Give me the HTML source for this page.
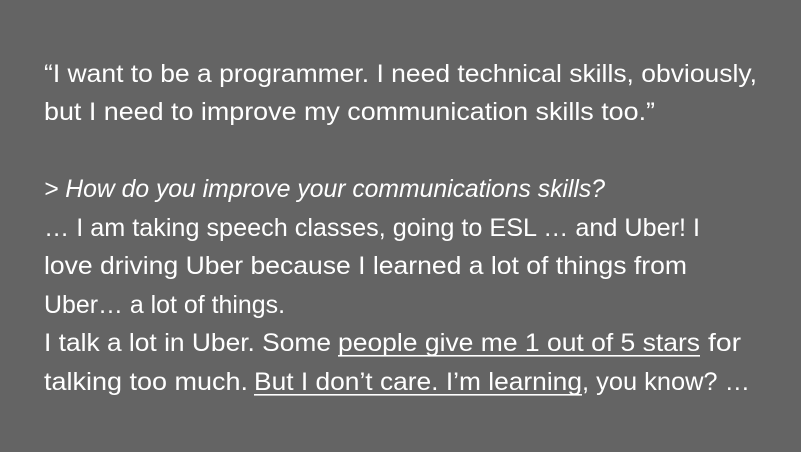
<!DOCTYPE html>
<html><head><meta charset="utf-8"><style>
html,body{margin:0;padding:0;background:#646464;width:801px;height:452px;overflow:hidden}
svg text{font-family:"Liberation Sans",sans-serif;font-size:25px;fill:#fff}
</style></head><body>
<svg width="801" height="452" xmlns="http://www.w3.org/2000/svg">
<text x="44" y="82" textLength="713" lengthAdjust="spacingAndGlyphs">“I want to be a programmer. I need technical skills, obviously,</text>
<text x="44" y="120" textLength="611" lengthAdjust="spacingAndGlyphs">but I need to improve my communication skills too.”</text>
<text x="44" y="197" textLength="561" lengthAdjust="spacingAndGlyphs" font-style="italic">&gt; How do you improve your communications skills?</text>
<text x="44" y="236" textLength="656" lengthAdjust="spacingAndGlyphs">… I am taking speech classes, going to ESL … and Uber! I</text>
<text x="44" y="274" textLength="643" lengthAdjust="spacingAndGlyphs">love driving Uber because I learned a lot of things from</text>
<text x="44" y="313" textLength="241" lengthAdjust="spacingAndGlyphs">Uber… a lot of things.</text>
<text x="44" y="351" textLength="287" lengthAdjust="spacingAndGlyphs">I talk a lot in Uber. Some</text>
<text x="338" y="351" textLength="362" lengthAdjust="spacingAndGlyphs">people give me 1 out of 5 stars</text>
<text x="708" y="351" textLength="33" lengthAdjust="spacingAndGlyphs">for</text>
<rect x="338" y="355" width="362" height="1.6" fill="#fff"/>
<text x="44" y="390" textLength="204" lengthAdjust="spacingAndGlyphs">talking too much.</text>
<text x="254" y="390" textLength="328" lengthAdjust="spacingAndGlyphs">But I don’t care. I’m learning</text>
<text x="582" y="390" textLength="168" lengthAdjust="spacingAndGlyphs">, you know? …</text>
<rect x="254" y="394" width="328" height="1.6" fill="#fff"/>
</svg>
</body></html>
